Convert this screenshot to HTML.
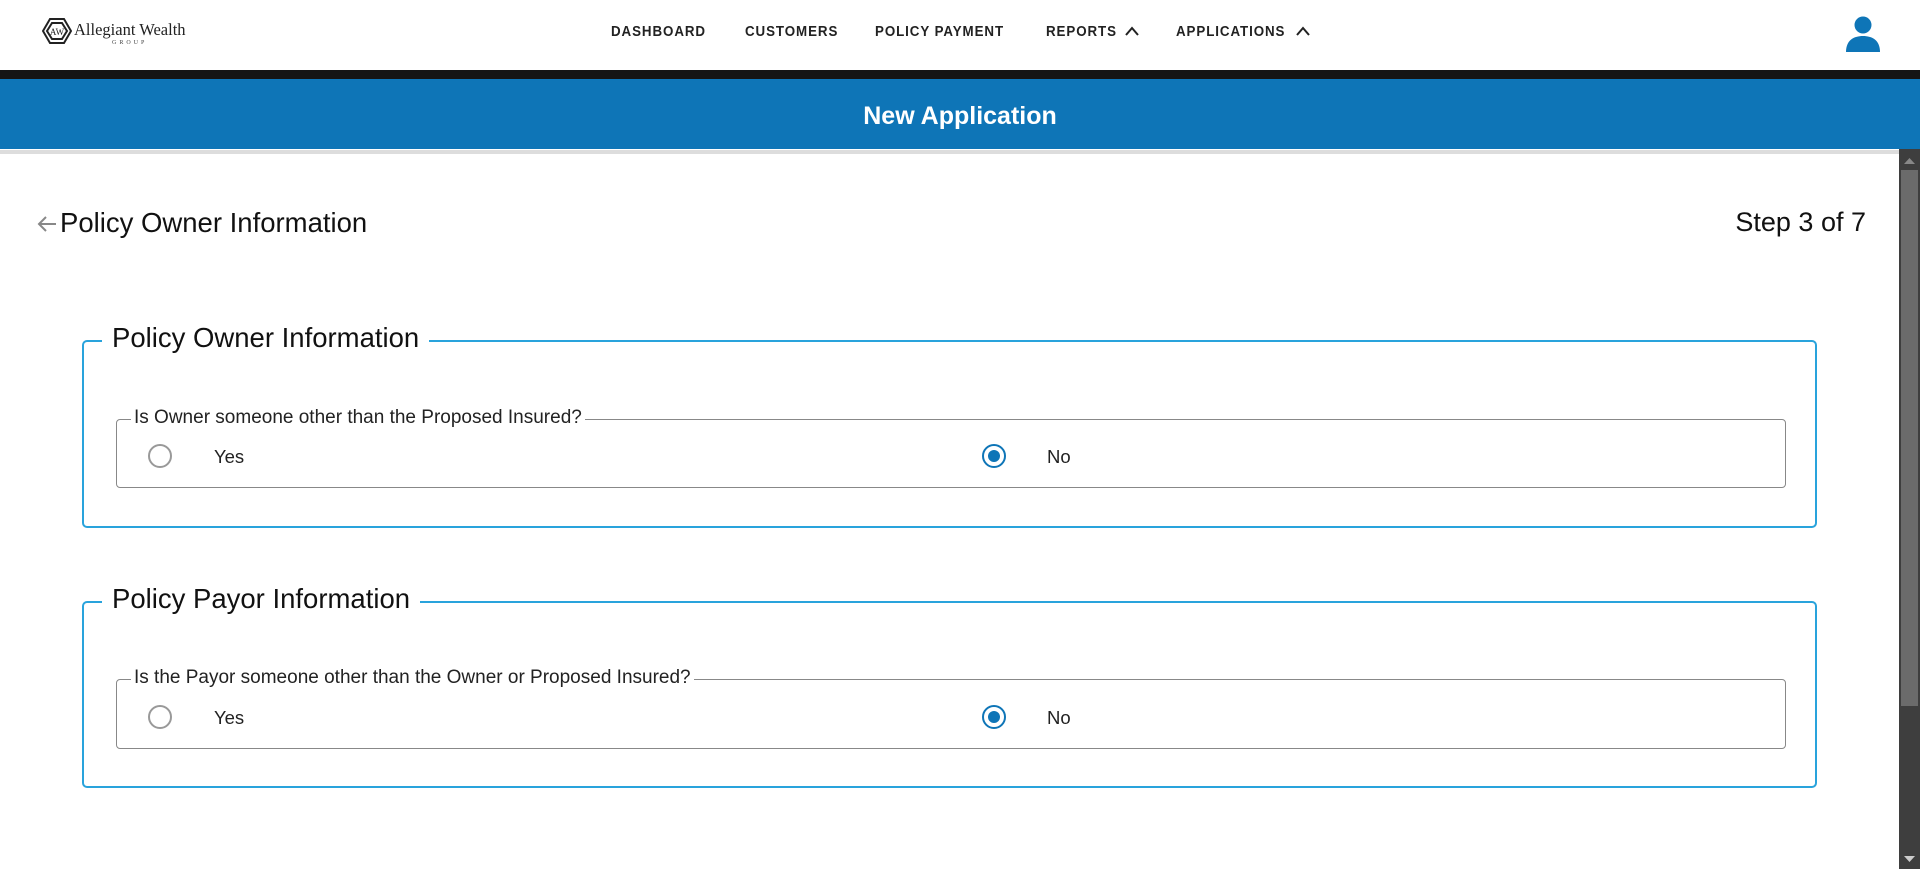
<!DOCTYPE html>
<html><head><meta charset="utf-8"><style>
*{box-sizing:border-box;margin:0;padding:0}
body{width:1920px;height:869px;overflow:hidden;background:#fff;font-family:"Liberation Sans",sans-serif;color:#111;position:relative}
.hdr{position:absolute;left:0;top:0;width:1920px;height:70px;background:#fff}
.nav{position:absolute;top:24px;font-size:14.5px;letter-spacing:1px;color:#222;font-weight:bold;transform:scaleX(.92);transform-origin:left}
.blk{position:absolute;top:70px;left:0;width:1920px;height:9px;background:#151515}
.blue{position:absolute;top:79px;left:0;width:1920px;height:70px;background:#0e75b7;color:#fff;font-weight:bold;font-size:25px;text-align:center;line-height:74px}
.sh{position:absolute;top:150px;left:0;width:1899px;height:4px;background:#ddd}
.sb{position:absolute;left:1899px;top:149px;width:21px;height:720px;background:#3e3e3e}
.thumb{position:absolute;left:1901px;top:170px;width:17px;height:536px;background:#6b6b6b}
.fs{position:absolute;border:2px solid #29a3dc;border-radius:5px}
.lg{position:absolute;background:#fff;font-size:27.5px;padding:0 10px;color:#111}
.in{position:absolute;border:1px solid #888;border-radius:4px}
.il{position:absolute;background:#fff;font-size:19px;padding:0 3px;color:#222;top:-13px;left:14px}
.r{position:absolute;width:24px;height:24px;border-radius:50%;border:2px solid #999}
.rs{border:2px solid #0e75b7}
.rs::after{content:"";position:absolute;left:4px;top:4px;width:12px;height:12px;border-radius:50%;background:#0e75b7}
.t{position:absolute;font-size:18.5px;color:#222}
</style></head><body>
<div class="hdr">
<svg style="position:absolute;left:42px;top:18px" width="30" height="26" viewBox="0 0 30 26"><polygon points="8,1 22,1 29,13 22,25 8,25 1,13" fill="none" stroke="#222" stroke-width="2"/><polygon points="10,5 20,5 25,13 20,21 10,21 5,13" fill="none" stroke="#222" stroke-width="2"/><text x="15" y="17" font-size="9" text-anchor="middle" font-family="Liberation Serif" fill="#222">AW</text></svg>
<div style="position:absolute;left:74px;top:20px;font-family:'Liberation Serif',serif;font-size:16.5px;color:#222">Allegiant Wealth</div>
<div style="position:absolute;left:112px;top:40px;font-family:'Liberation Serif',serif;font-size:6px;letter-spacing:3px;color:#444">GROUP</div>
<div class="nav" style="left:611px">DASHBOARD</div>
<div class="nav" style="left:745px">CUSTOMERS</div>
<div class="nav" style="left:875px">POLICY PAYMENT</div>
<div class="nav" style="left:1046px">REPORTS</div>
<svg style="position:absolute;left:1125px;top:26px" width="14" height="10"><polyline points="1,9 7,2 13,9" fill="none" stroke="#222" stroke-width="2"/></svg>
<div class="nav" style="left:1176px">APPLICATIONS</div>
<svg style="position:absolute;left:1296px;top:26px" width="14" height="10"><polyline points="1,9 7,2 13,9" fill="none" stroke="#222" stroke-width="2"/></svg>
<svg style="position:absolute;left:1846px;top:16px" width="34" height="36" viewBox="0 0 34 36"><circle cx="17" cy="9" r="8.5" fill="#0e75b7"/><path d="M0,36 C0,24 8,20 17,20 C26,20 34,24 34,36Z" fill="#0e75b7"/></svg>
</div>
<div class="blk"></div>
<div class="blue">New Application</div>
<div class="sh"></div>
<div class="sb"></div><div class="thumb"></div>
<svg style="position:absolute;left:1903px;top:157px" width="13" height="8"><polygon points="1,7 6.5,1 12,7" fill="#888"/></svg>
<svg style="position:absolute;left:1903px;top:855px" width="13" height="8"><polygon points="1,1 6.5,7 12,1" fill="#ccc"/></svg>
<svg style="position:absolute;left:36px;top:214px" width="22" height="20"><path d="M20,10 H3 M10,3 L3,10 L10,17" fill="none" stroke="#888" stroke-width="2"/></svg>
<div style="position:absolute;left:60px;top:207px;font-size:27.5px">Policy Owner Information</div>
<div style="position:absolute;right:54px;top:207px;font-size:27px">Step 3 of 7</div>

<div class="fs" style="left:82px;top:340px;width:1735px;height:188px">
<div class="lg" style="left:18px;top:-20px">Policy Owner Information</div>
<div class="in" style="left:32px;top:77px;width:1670px;height:69px"><div class="il">Is Owner someone other than the Proposed Insured?</div>
<div class="r" style="left:31px;top:24px"></div><div class="t" style="left:97px;top:26px">Yes</div>
<div class="r rs" style="left:865px;top:24px"></div><div class="t" style="left:930px;top:26px">No</div></div>
</div>

<div class="fs" style="left:82px;top:601px;width:1735px;height:187px">
<div class="lg" style="left:18px;top:-20px">Policy Payor Information</div>
<div class="in" style="left:32px;top:76px;width:1670px;height:70px"><div class="il">Is the Payor someone other than the Owner or Proposed Insured?</div>
<div class="r" style="left:31px;top:25px"></div><div class="t" style="left:97px;top:27px">Yes</div>
<div class="r rs" style="left:865px;top:25px"></div><div class="t" style="left:930px;top:27px">No</div></div>
</div>
</body></html>
